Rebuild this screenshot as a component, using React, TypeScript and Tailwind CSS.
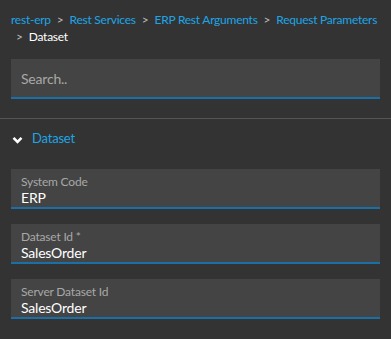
import React from 'react';

const crumbs = ['rest-erp', 'Rest Services', 'ERP Rest Arguments', 'Request Parameters'];

const fields = [
    { label: 'System Code', value: 'ERP' },
    { label: 'Dataset Id *', value: 'SalesOrder' },
    { label: 'Server Dataset Id', value: 'SalesOrder' },
];

export default function App() {
    return (
        <div
            className="w-[391px] h-[339px] bg-[#333333] overflow-hidden"
            style={{ fontFamily: 'Lato, "Noto Sans", sans-serif' }}
        >
            {/* Breadcrumb */}
            <div className="px-[11px] pt-[11px] text-[12px] leading-[17px] tracking-[-0.25px] text-[#1ea5e6] flex flex-wrap">
                {crumbs.map((c, i) => (
                    <span key={c} className="whitespace-nowrap">
                        {i > 0 && <span className="text-[#bbbbbb] mx-[6px]">&gt;</span>}
                        {c}
                    </span>
                ))}
                <span className="whitespace-nowrap">
                    <span className="text-[#bbbbbb] ml-[5px] mr-[6px]">&gt;</span>
                    <span className="text-white">Dataset</span>
                </span>
            </div>

            {/* Search */}
            <div className="px-[11px] mt-[14px]">
                <div className="h-[40px] bg-[#444444] border-b-2 border-[#1a6fa6] flex items-center px-[10px]">
                    <span className="text-[14px] tracking-[-0.2px] text-[#a8a8a8]">Search..</span>
                </div>
            </div>

            <div className="mt-[19px] border-t border-[#555555]" />

            {/* Section header */}
            <div className="flex items-center h-[40px] px-[12px] gap-[9px]">
                <svg width="11" height="8" viewBox="0 0 11 8" className="mt-[1px]">
                    <path d="M1.5 1.8 L5.5 5.8 L9.5 1.8" stroke="white" strokeWidth="2.6" fill="none" />
                </svg>
                <span className="text-[13px] tracking-[-0.2px] text-[#1ea5e6]">Dataset</span>
            </div>

            {/* Fields */}
            <div className="px-[11px] pt-[10px] flex flex-col gap-[15px]">
                {fields.map((f) => (
                    <div key={f.label} className="h-[40px] bg-[#444444] border-b-2 border-[#1a6fa6] px-[10px] pt-[5px]">
                        <div className="text-[12px] leading-[15px] tracking-[-0.2px] text-[#a8a8a8]">{f.label}</div>
                        <div className="text-[14px] leading-[18px] tracking-[-0.2px] text-white">{f.value}</div>
                    </div>
                ))}
            </div>
        </div>
    );
}
